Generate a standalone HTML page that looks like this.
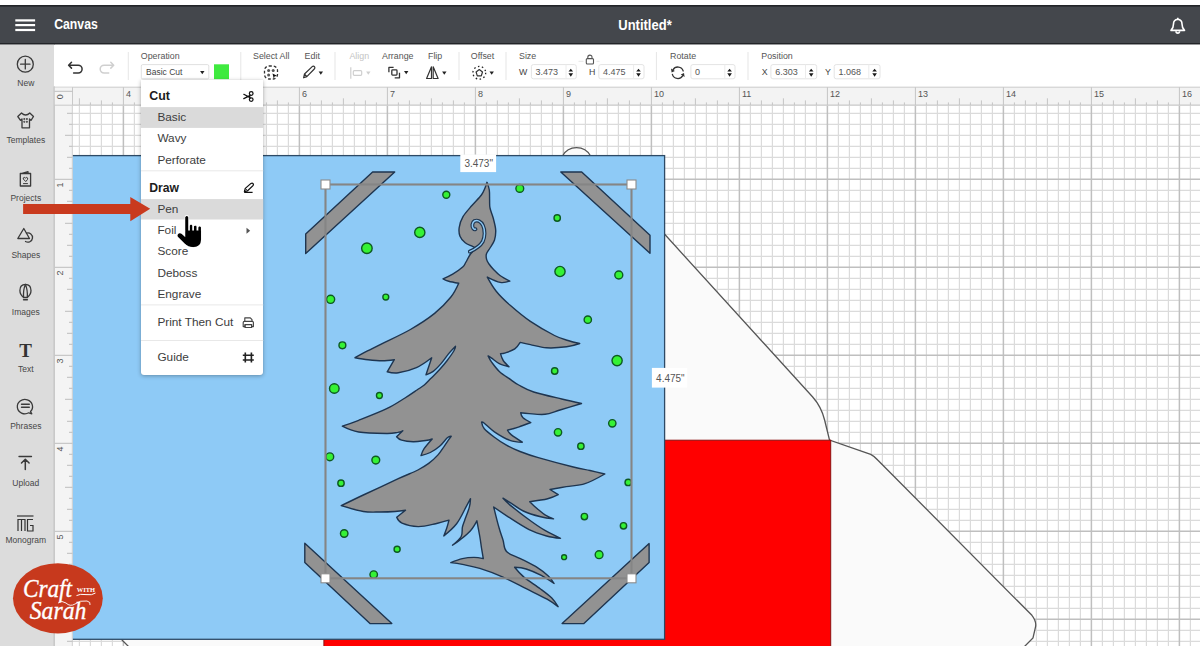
<!DOCTYPE html><html><head><meta charset="utf-8"><style>
*{box-sizing:border-box;margin:0;padding:0}
html,body{width:1200px;height:646px;overflow:hidden;background:#fff;font-family:"Liberation Sans",sans-serif}
body{position:relative}
.a{position:absolute}
text{font-family:"Liberation Sans",sans-serif}
.serif{font-family:"Liberation Serif",serif}
</style></head><body>
<svg class="a" style="left:0;top:0" width="1200" height="646" viewBox="0 0 1200 646">
<rect x="54" y="105" width="1146" height="541" fill="#fff"/>
<path d="M79.4 105V646M90.4 105V646M101.4 105V646M112.4 105V646M134.4 105V646M145.4 105V646M156.4 105V646M167.4 105V646M178.4 105V646M189.4 105V646M200.4 105V646M222.4 105V646M233.4 105V646M244.4 105V646M255.4 105V646M266.4 105V646M277.4 105V646M288.4 105V646M310.4 105V646M321.4 105V646M332.4 105V646M343.4 105V646M354.4 105V646M365.4 105V646M376.4 105V646M398.4 105V646M409.4 105V646M420.4 105V646M431.4 105V646M442.4 105V646M453.4 105V646M464.4 105V646M486.4 105V646M497.4 105V646M508.4 105V646M519.4 105V646M530.4 105V646M541.4 105V646M552.4 105V646M574.4 105V646M585.4 105V646M596.4 105V646M607.4 105V646M618.4 105V646M629.4 105V646M640.4 105V646M662.4 105V646M673.4 105V646M684.4 105V646M695.4 105V646M706.4 105V646M717.4 105V646M728.4 105V646M750.4 105V646M761.4 105V646M772.4 105V646M783.4 105V646M794.4 105V646M805.4 105V646M816.4 105V646M838.4 105V646M849.4 105V646M860.4 105V646M871.4 105V646M882.4 105V646M893.4 105V646M904.4 105V646M926.4 105V646M937.4 105V646M948.4 105V646M959.4 105V646M970.4 105V646M981.4 105V646M992.4 105V646M1014.4 105V646M1025.4 105V646M1036.4 105V646M1047.4 105V646M1058.4 105V646M1069.4 105V646M1080.4 105V646M1102.4 105V646M1113.4 105V646M1124.4 105V646M1135.4 105V646M1146.4 105V646M1157.4 105V646M1168.4 105V646M1190.4 105V646M72 113.3H1200M72 124.3H1200M72 135.3H1200M72 146.3H1200M72 157.3H1200M72 168.3H1200M72 190.3H1200M72 201.3H1200M72 212.3H1200M72 223.3H1200M72 234.3H1200M72 245.3H1200M72 256.3H1200M72 278.3H1200M72 289.3H1200M72 300.3H1200M72 311.3H1200M72 322.3H1200M72 333.3H1200M72 344.3H1200M72 366.3H1200M72 377.3H1200M72 388.3H1200M72 399.3H1200M72 410.3H1200M72 421.3H1200M72 432.3H1200M72 454.3H1200M72 465.3H1200M72 476.3H1200M72 487.3H1200M72 498.3H1200M72 509.3H1200M72 520.3H1200M72 542.3H1200M72 553.3H1200M72 564.3H1200M72 575.3H1200M72 586.3H1200M72 597.3H1200M72 608.3H1200M72 630.3H1200M72 641.3H1200" stroke="#dbdbdb" stroke-width="1.2" fill="none"/>
<path d="M123.4 105V646M211.4 105V646M299.4 105V646M387.4 105V646M475.4 105V646M563.4 105V646M651.4 105V646M739.4 105V646M827.4 105V646M915.4 105V646M1003.4 105V646M1091.4 105V646M1179.4 105V646M72 179.3H1200M72 267.3H1200M72 355.3H1200M72 443.3H1200M72 531.3H1200M72 619.3H1200" stroke="#bfbfbf" stroke-width="1.5" fill="none"/>
<path d="M562.5 156A16 16 0 0 1 590.6 156L664 156L664.2 233.8L812.7 397Q821.5 407 824.6 420L829.5 440L870.7 454.3Q875 456.5 877.7 460L1031.9 615.3Q1036.5 621 1035.6 626.6L1033 638L1021 650L132 650L122 640L122 400L300 156Z" fill="#fafafa" stroke="#555" stroke-width="1.3"/>
<rect x="323.9" y="440.2" width="506.8" height="220" fill="#ff0000" stroke="#8a1010" stroke-width="1"/>
<rect x="40" y="155.6" width="624.6" height="483.7" fill="#8ecaf6" stroke="#2d4a66" stroke-width="1.3"/>
<g fill="#929292" stroke="#1e3550" stroke-width="1.4" stroke-linejoin="round">
<polygon points="372.6,172 394.7,172 305.7,253.6 305.7,234"/>
<polygon points="560.8,172 581.7,172 650,235.2 650,253.3"/>
<polygon points="304.8,543.2 304.8,562.5 370,623.6 391.8,623.6"/>
<polygon points="649.1,543.6 649.1,562.5 583.9,623.6 562.1,623.6"/>
</g>
<path d="M487.0 182.3C487.0 182.3 488.9 187.1 489.3 190.0C489.7 192.9 489.5 197.0 489.6 200.0C489.7 203.0 489.4 205.0 490.0 208.0C490.6 211.0 492.2 214.3 493.2 218.0C494.1 221.7 495.5 226.3 495.7 230.0C495.9 233.7 495.4 237.0 494.5 240.0C493.6 243.0 491.4 245.7 490.0 248.0C488.6 250.3 487.0 252.1 486.4 254.0C485.8 255.9 486.2 257.7 486.6 259.4C487.0 261.1 487.8 262.2 489.0 264.0C490.2 265.8 492.2 268.1 494.0 270.0C495.8 271.9 497.4 273.6 500.0 275.5C502.6 277.4 509.8 281.2 509.8 281.2C509.8 281.2 503.9 283.1 500.2 282.4C496.4 281.7 487.3 277.1 487.3 277.1C487.3 277.1 492.4 286.5 496.2 291.2C500.0 295.9 504.5 300.3 510.2 305.3C515.9 310.3 523.0 316.4 530.4 321.4C537.8 326.4 548.2 332.3 554.5 335.5C560.8 338.7 563.8 339.2 568.0 340.5C572.2 341.8 579.7 343.5 579.7 343.5C579.7 343.5 572.1 346.1 566.6 346.8C561.1 347.5 552.5 348.2 546.5 347.8C540.5 347.4 534.8 345.5 530.4 344.6C526.0 343.7 520.2 342.4 520.2 342.4C520.2 342.4 517.2 347.2 514.8 348.9C512.3 350.6 507.9 352.0 505.5 352.8C503.1 353.6 500.5 353.6 500.5 353.6C500.5 353.6 501.8 358.3 503.2 360.5C504.6 362.7 509.0 366.7 509.0 366.7C509.0 366.7 502.2 365.0 499.3 363.6C496.4 362.2 493.5 359.5 491.6 358.2C489.7 356.9 488.1 355.9 488.1 355.9C488.1 355.9 489.7 359.5 491.6 362.1C493.5 364.7 496.1 368.4 499.3 371.4C502.5 374.4 507.8 377.6 511.0 379.9C514.2 382.2 514.9 383.0 518.7 385.0C522.5 387.0 526.5 389.7 533.7 392.0C540.9 394.3 553.7 397.1 561.7 399.0C569.7 400.9 581.5 403.5 581.5 403.5C581.5 403.5 566.1 408.2 560.0 410.0C553.9 411.8 550.1 413.7 545.0 414.3C539.9 414.9 533.2 413.9 529.2 413.6C525.2 413.4 520.7 412.8 520.7 412.8C520.7 412.8 521.3 416.2 523.0 417.8C524.7 419.4 530.8 422.5 530.8 422.5C530.8 422.5 522.3 425.8 518.4 427.1C514.5 428.4 507.5 430.2 507.5 430.2C507.5 430.2 508.9 432.9 511.4 434.9C513.9 436.9 522.3 442.2 522.3 442.2C522.3 442.2 514.5 442.0 509.9 440.3C505.2 438.6 498.7 434.7 494.4 431.8C490.1 428.9 486.4 424.8 484.3 423.2C482.2 421.6 481.6 422.1 481.6 422.1C481.6 422.1 482.2 426.2 484.3 428.7C486.4 431.2 490.8 434.5 494.4 437.2C498.0 439.9 501.7 442.5 506.0 444.9C510.3 447.3 514.6 449.4 520.0 451.5C525.4 453.6 529.4 455.1 538.3 457.7C547.2 460.3 564.7 464.9 573.3 467.0C581.9 469.1 584.8 469.3 590.0 470.5C595.2 471.7 604.8 474.0 604.8 474.0C604.8 474.0 591.4 481.6 585.0 483.7C578.6 485.8 572.1 485.6 566.3 486.6C560.5 487.6 550.0 489.5 550.0 489.5C550.0 489.5 558.2 494.7 558.2 494.7C558.2 494.7 552.5 497.6 547.7 498.8C543.0 500.0 529.7 501.7 529.7 501.7C529.7 501.7 534.7 506.5 537.3 508.7C539.9 510.9 542.7 513.4 545.4 515.1C548.1 516.8 553.5 518.9 553.5 518.9C553.5 518.9 545.7 518.1 540.7 516.8C535.7 515.5 528.3 513.3 523.3 511.0C518.3 508.7 514.0 505.0 510.6 502.9C507.2 500.8 503.0 498.2 503.0 498.2C503.0 498.2 506.9 502.5 511.7 506.4C516.5 510.3 525.9 517.5 531.5 521.5C537.1 525.5 540.6 527.9 545.4 530.7C550.2 533.5 560.5 538.3 560.5 538.3C560.5 538.3 551.8 537.5 546.6 536.0C541.4 534.5 535.5 532.8 529.1 529.6C522.7 526.4 514.1 520.6 508.2 516.8C502.3 513.0 493.7 507.0 493.7 507.0C493.7 507.0 497.3 521.8 498.9 527.3C500.4 532.8 501.7 536.0 503.0 540.0C504.3 544.0 503.6 548.5 506.5 551.6C509.4 554.7 515.2 555.9 520.4 558.6C525.6 561.3 533.1 565.0 537.8 567.9C542.4 570.8 545.6 573.4 548.3 576.0C551.0 578.6 554.1 583.5 554.1 583.5C554.1 583.5 545.9 577.8 541.3 575.4C536.6 573.0 530.7 570.4 526.2 569.0C521.8 567.6 514.6 567.3 514.6 567.3C514.6 567.3 519.6 573.5 523.9 577.1C528.2 580.7 535.6 585.2 540.2 588.7C544.9 592.2 548.8 595.0 551.8 598.0C554.8 601.0 558.1 606.7 558.1 606.7C558.1 606.7 552.4 602.2 547.1 599.2C541.8 596.2 533.6 592.4 526.2 588.7C518.9 585.0 510.7 580.5 503.0 577.1C495.3 573.7 486.6 570.5 479.8 568.4C473.0 566.3 467.2 565.4 462.4 564.4C457.6 563.4 450.8 562.6 450.8 562.6C450.8 562.6 458.5 559.5 462.4 558.6C466.3 557.7 470.5 557.4 474.0 557.4C477.5 557.4 483.3 558.6 483.3 558.6C483.3 558.6 482.1 551.7 481.5 548.0C480.9 544.3 480.6 541.0 479.8 536.5C479.0 532.0 476.9 520.8 476.9 520.8C476.9 520.8 473.3 527.5 470.5 530.7C467.7 533.9 463.0 537.5 460.0 539.9C457.0 542.3 452.5 545.2 452.5 545.2C452.5 545.2 459.6 539.5 461.2 536.5C462.8 533.5 461.8 529.9 462.4 527.2C463.0 524.5 463.5 523.5 464.7 520.2C465.9 516.9 468.3 511.0 469.3 507.4C470.3 503.8 470.5 498.7 470.5 498.7C470.5 498.7 468.1 503.2 465.8 507.4C463.5 511.6 460.3 519.0 456.6 523.7C452.9 528.5 443.8 535.9 443.8 535.9C443.8 535.9 445.8 530.9 446.7 528.3C447.6 525.7 449.0 520.2 449.0 520.2C449.0 520.2 440.8 522.6 435.7 523.7C430.6 524.8 423.8 526.7 418.2 526.6C412.6 526.5 405.6 524.7 402.0 523.1C398.4 521.5 396.7 517.3 396.7 517.3C396.7 517.3 405.5 510.3 405.5 510.3C405.5 510.3 399.2 511.2 395.0 511.5C390.8 511.8 385.3 512.0 380.0 512.0C374.7 512.0 369.8 512.5 363.3 511.5C356.8 510.4 341.2 505.7 341.2 505.7C341.2 505.7 353.8 499.5 363.3 495.0C372.8 490.5 389.2 482.9 398.3 478.7C407.4 474.5 412.8 472.6 417.9 470.0C423.0 467.4 425.3 465.9 428.7 463.4C432.1 460.9 435.4 457.8 438.0 454.9C440.6 452.0 442.4 448.9 444.2 446.3C446.0 443.7 447.7 441.1 448.9 439.4C450.1 437.7 451.2 436.3 451.2 436.3C451.2 436.3 449.2 436.1 447.3 437.8C445.4 439.5 442.4 443.9 439.6 446.3C436.8 448.8 433.4 450.9 430.3 452.5C427.2 454.1 421.0 455.6 421.0 455.6C421.0 455.6 422.2 451.5 424.1 448.7C426.0 445.9 432.2 439.0 432.2 439.0C432.2 439.0 428.8 440.1 425.6 440.5C422.4 440.9 417.2 441.8 413.2 441.7C409.2 441.6 404.4 440.9 401.6 440.1C398.8 439.3 396.6 436.7 396.6 436.7C396.6 436.7 402.8 430.8 402.8 430.8C402.8 430.8 400.4 431.9 397.7 432.4C395.0 432.8 393.2 433.6 386.7 433.5C380.2 433.4 366.1 433.2 358.7 432.0C351.3 430.8 342.3 426.2 342.3 426.2C342.3 426.2 351.3 423.2 358.7 420.3C366.1 417.4 379.0 412.4 386.7 408.7C394.4 405.0 399.9 401.1 405.0 398.0C410.1 394.9 413.8 392.2 417.0 390.0C420.2 387.8 422.0 386.9 424.3 385.0C426.6 383.1 428.5 380.8 431.0 378.3C433.5 375.8 436.7 372.8 439.4 369.8C442.1 366.8 444.8 363.7 447.2 360.5C449.6 357.3 452.7 352.9 454.1 350.5C455.5 348.1 455.5 346.2 455.5 346.2C455.5 346.2 451.1 350.7 448.7 353.6C446.3 356.5 443.6 360.6 441.0 363.6C438.4 366.6 435.7 369.5 433.2 371.4C430.7 373.3 426.0 374.8 426.0 374.8C426.0 374.8 431.7 357.8 431.7 357.8C431.7 357.8 422.0 365.2 416.4 367.7C410.8 370.2 403.2 372.1 398.3 372.8C393.4 373.5 387.2 371.8 387.2 371.8C387.2 371.8 394.3 359.7 394.3 359.7C394.3 359.7 386.6 360.7 382.2 360.7C377.8 360.7 372.6 360.2 368.1 359.7C363.6 359.2 355.0 357.7 355.0 357.7C355.0 357.7 359.6 355.0 364.1 352.6C368.6 350.2 374.5 347.5 382.2 343.6C389.9 339.8 401.7 334.5 410.4 329.5C419.1 324.5 427.9 318.8 434.6 313.4C441.3 308.0 446.7 302.3 450.7 297.3C454.7 292.3 458.7 283.2 458.7 283.2C458.7 283.2 451.3 281.9 448.7 281.2C446.1 280.5 443.0 278.8 443.0 278.8C443.0 278.8 449.4 276.1 452.7 274.1C456.0 272.2 460.5 269.1 462.7 267.1C464.9 265.1 464.7 264.2 466.0 262.0C467.3 259.8 468.8 256.2 470.5 254.0C472.2 251.8 476.5 248.5 476.5 248.5C476.5 248.5 474.4 247.3 472.5 246.3C470.6 245.3 467.3 244.4 465.2 242.7C463.1 241.0 461.0 238.7 460.0 236.2C459.0 233.7 458.7 230.8 459.2 227.5C459.7 224.2 460.9 220.3 463.0 216.7C465.1 213.1 468.6 209.4 471.7 205.8C474.8 202.2 479.2 198.0 481.4 195.0C483.6 192.0 484.1 190.1 485.0 188.0C485.9 185.9 487.0 182.3 487.0 182.3Z" fill="#929292" stroke="#1e3550" stroke-width="1.4" stroke-linejoin="round"/>
<path d="M469.8 251.6C474.5 249.5 480 246.5 482.8 241.5C485 237 485.2 230 483 225.5C481 221.5 477.5 219.8 474.5 221C472 222.5 471.8 226.5 473.2 228.3C474 229.3 475 229.5 475.5 229.2" fill="none" stroke="#1e3550" stroke-width="3.8" stroke-linecap="round"/>
<path d="M469.8 251.6C474.5 249.5 480 246.5 482.8 241.5C485 237 485.2 230 483 225.5C481 221.5 477.5 219.8 474.5 221C472 222.5 471.8 226.5 473.2 228.3C474 229.3 475 229.5 475.5 229.2" fill="none" stroke="#8ecaf6" stroke-width="1.5" stroke-linecap="round"/>
<g fill="#35f235" stroke="#0d5a22" stroke-width="1.4">
<circle cx="446.3" cy="194.8" r="3.50"/>
<circle cx="419.8" cy="232.4" r="5.10"/>
<circle cx="366.9" cy="248.3" r="5.26"/>
<circle cx="330.6" cy="299.3" r="4.06"/>
<circle cx="385.8" cy="297.1" r="2.94"/>
<circle cx="519.8" cy="188.4" r="3.90"/>
<circle cx="557.2" cy="218.0" r="3.18"/>
<circle cx="560.0" cy="271.5" r="5.10"/>
<circle cx="618.8" cy="275.0" r="3.98"/>
<circle cx="587.8" cy="319.7" r="3.66"/>
<circle cx="342.4" cy="345.3" r="3.42"/>
<circle cx="334.3" cy="388.5" r="4.78"/>
<circle cx="379.4" cy="395.5" r="2.94"/>
<circle cx="329.8" cy="456.8" r="3.90"/>
<circle cx="375.8" cy="460.1" r="3.90"/>
<circle cx="341.0" cy="483.2" r="3.18"/>
<circle cx="617.1" cy="360.6" r="5.10"/>
<circle cx="554.7" cy="371.0" r="3.18"/>
<circle cx="612.3" cy="423.3" r="3.66"/>
<circle cx="558.0" cy="432.3" r="3.66"/>
<circle cx="580.9" cy="446.2" r="3.18"/>
<circle cx="628.2" cy="482.4" r="3.18"/>
<circle cx="344.2" cy="533.5" r="3.74"/>
<circle cx="397.1" cy="549.2" r="3.02"/>
<circle cx="373.7" cy="574.6" r="3.74"/>
<circle cx="584.4" cy="516.6" r="3.18"/>
<circle cx="623.5" cy="525.8" r="3.18"/>
<circle cx="564.1" cy="557.2" r="2.46"/>
<circle cx="599.1" cy="554.7" r="3.90"/>
</g>
<rect x="325.5" y="184.5" width="306" height="393.8" fill="none" stroke="#858585" stroke-width="2.1"/>
<rect x="321.0" y="180.0" width="9" height="9" fill="#fff" stroke="#8c8c8c" stroke-width="1.1"/>
<rect x="627.0" y="180.0" width="9" height="9" fill="#fff" stroke="#8c8c8c" stroke-width="1.1"/>
<rect x="321.0" y="573.8" width="9" height="9" fill="#fff" stroke="#8c8c8c" stroke-width="1.1"/>
<rect x="627.0" y="573.8" width="9" height="9" fill="#fff" stroke="#8c8c8c" stroke-width="1.1"/>
<rect x="460.3" y="154.5" width="35.8" height="17.6" fill="#fff"/>
<text x="464.4" y="166.7" font-size="10" fill="#555">3.473"</text>
<rect x="651.9" y="367.9" width="35.3" height="19.7" fill="#fff"/>
<text x="656.1" y="381.7" font-size="10" fill="#555">4.475"</text>
<rect x="54" y="86.5" width="1146" height="19" fill="#f3f3f3"/>
<path d="M54 87H1200" stroke="#d2d2d2" stroke-width="1.2"/>
<path d="M54 105.2H1200" stroke="#c9c9c9" stroke-width="1.2"/>
<path d="M79.4 98.3V105M90.4 102.4V105M101.4 100.4V105M112.4 102.4V105M123.4 87V105M134.4 102.4V105M145.4 100.4V105M156.4 102.4V105M167.4 98.3V105M178.4 102.4V105M189.4 100.4V105M200.4 102.4V105M211.4 87V105M222.4 102.4V105M233.4 100.4V105M244.4 102.4V105M255.4 98.3V105M266.4 102.4V105M277.4 100.4V105M288.4 102.4V105M299.4 87V105M310.4 102.4V105M321.4 100.4V105M332.4 102.4V105M343.4 98.3V105M354.4 102.4V105M365.4 100.4V105M376.4 102.4V105M387.4 87V105M398.4 102.4V105M409.4 100.4V105M420.4 102.4V105M431.4 98.3V105M442.4 102.4V105M453.4 100.4V105M464.4 102.4V105M475.4 87V105M486.4 102.4V105M497.4 100.4V105M508.4 102.4V105M519.4 98.3V105M530.4 102.4V105M541.4 100.4V105M552.4 102.4V105M563.4 87V105M574.4 102.4V105M585.4 100.4V105M596.4 102.4V105M607.4 98.3V105M618.4 102.4V105M629.4 100.4V105M640.4 102.4V105M651.4 87V105M662.4 102.4V105M673.4 100.4V105M684.4 102.4V105M695.4 98.3V105M706.4 102.4V105M717.4 100.4V105M728.4 102.4V105M739.4 87V105M750.4 102.4V105M761.4 100.4V105M772.4 102.4V105M783.4 98.3V105M794.4 102.4V105M805.4 100.4V105M816.4 102.4V105M827.4 87V105M838.4 102.4V105M849.4 100.4V105M860.4 102.4V105M871.4 98.3V105M882.4 102.4V105M893.4 100.4V105M904.4 102.4V105M915.4 87V105M926.4 102.4V105M937.4 100.4V105M948.4 102.4V105M959.4 98.3V105M970.4 102.4V105M981.4 100.4V105M992.4 102.4V105M1003.4 87V105M1014.4 102.4V105M1025.4 100.4V105M1036.4 102.4V105M1047.4 98.3V105M1058.4 102.4V105M1069.4 100.4V105M1080.4 102.4V105M1091.4 87V105M1102.4 102.4V105M1113.4 100.4V105M1124.4 102.4V105M1135.4 98.3V105M1146.4 102.4V105M1157.4 100.4V105M1168.4 102.4V105M1179.4 87V105M1190.4 102.4V105" stroke="#c4c4c4" stroke-width="1"/>
<text x="126.0" y="96.9" font-size="9" fill="#555">4</text>
<text x="214.0" y="96.9" font-size="9" fill="#555">5</text>
<text x="302.0" y="96.9" font-size="9" fill="#555">6</text>
<text x="390.0" y="96.9" font-size="9" fill="#555">7</text>
<text x="478.0" y="96.9" font-size="9" fill="#555">8</text>
<text x="566.0" y="96.9" font-size="9" fill="#555">9</text>
<text x="654.0" y="96.9" font-size="9" fill="#555">10</text>
<text x="742.0" y="96.9" font-size="9" fill="#555">11</text>
<text x="830.0" y="96.9" font-size="9" fill="#555">12</text>
<text x="918.0" y="96.9" font-size="9" fill="#555">13</text>
<text x="1006.0" y="96.9" font-size="9" fill="#555">14</text>
<text x="1094.0" y="96.9" font-size="9" fill="#555">15</text>
<text x="1182.0" y="96.9" font-size="9" fill="#555">16</text>
<rect x="54" y="86.5" width="18.5" height="560" fill="#f4f4f4"/>
<path d="M54.2 87V646" stroke="#c9c9c9" stroke-width="1.4"/>
<path d="M72.3 105V646" stroke="#d0d0d0" stroke-width="1"/>
<path d="M54 91.3H72.5M69 102.3H72.5M67 113.3H72.5M69 124.3H72.5M65 135.3H72.5M69 146.3H72.5M67 157.3H72.5M69 168.3H72.5M54 179.3H72.5M69 190.3H72.5M67 201.3H72.5M69 212.3H72.5M65 223.3H72.5M69 234.3H72.5M67 245.3H72.5M69 256.3H72.5M54 267.3H72.5M69 278.3H72.5M67 289.3H72.5M69 300.3H72.5M65 311.3H72.5M69 322.3H72.5M67 333.3H72.5M69 344.3H72.5M54 355.3H72.5M69 366.3H72.5M67 377.3H72.5M69 388.3H72.5M65 399.3H72.5M69 410.3H72.5M67 421.3H72.5M69 432.3H72.5M54 443.3H72.5M69 454.3H72.5M67 465.3H72.5M69 476.3H72.5M65 487.3H72.5M69 498.3H72.5M67 509.3H72.5M69 520.3H72.5M54 531.3H72.5M69 542.3H72.5M67 553.3H72.5M69 564.3H72.5M65 575.3H72.5M69 586.3H72.5M67 597.3H72.5M69 608.3H72.5M54 619.3H72.5M69 630.3H72.5M67 641.3H72.5" stroke="#bdbdbd" stroke-width="1"/>
<text transform="translate(62.8 99.5) rotate(-90)" font-size="9" fill="#555">0</text>
<text transform="translate(62.8 187.5) rotate(-90)" font-size="9" fill="#555">1</text>
<text transform="translate(62.8 275.5) rotate(-90)" font-size="9" fill="#555">2</text>
<text transform="translate(62.8 363.5) rotate(-90)" font-size="9" fill="#555">3</text>
<text transform="translate(62.8 451.5) rotate(-90)" font-size="9" fill="#555">4</text>
<text transform="translate(62.8 539.5) rotate(-90)" font-size="9" fill="#555">5</text>
<text transform="translate(62.8 627.5) rotate(-90)" font-size="9" fill="#555">6</text>
<rect x="54" y="87" width="18.5" height="18" fill="#f4f4f4"/>
<path d="M72.5 87V105M54 105.2H72.5" stroke="#c9c9c9" stroke-width="1"/>
<path d="M54 86.9H1200" stroke="#cdcdcd" stroke-width="1.3"/>
<path d="M54 91.3H72.5" stroke="#bdbdbd" stroke-width="1"/>
<text transform="translate(62.8 99.3) rotate(-90)" font-size="9" fill="#555">0</text>
<rect x="0" y="0" width="1200" height="6" fill="#fff"/>
<rect x="0" y="5" width="1200" height="39.5" fill="#44474c"/>
<rect x="0" y="5" width="1200" height="1.6" fill="#222428"/>
<rect x="0" y="43" width="1200" height="1.6" fill="#222428"/>
<rect x="15.3" y="19.3" width="19.8" height="2.2" fill="#fff"/>
<rect x="15.3" y="24.0" width="19.8" height="2.2" fill="#fff"/>
<rect x="15.3" y="28.9" width="19.8" height="2.2" fill="#fff"/>
<text x="54.2" y="29.3" font-size="14.4" font-weight="bold" fill="#fff" textLength="43.6" lengthAdjust="spacingAndGlyphs">Canvas</text>
<text x="618.3" y="30.2" font-size="14.4" font-weight="bold" fill="#fff" textLength="53.4" lengthAdjust="spacingAndGlyphs">Untitled*</text>
<g fill="none" stroke="#fff" stroke-width="1.6" stroke-linejoin="round"><path d="M1171 30.4H1184.5Q1182 28 1182 24Q1182 19.8 1177.8 19.3Q1173.5 19.8 1173.5 24Q1173.5 28 1171 30.4Z"/><path d="M1176 31.3A1.8 1.8 0 0 0 1179.6 31.3"/><path d="M1177.8 17.8V19.2"/></g>
<rect x="54.4" y="44.6" width="1146" height="42" fill="#fff"/>
<rect x="127.8" y="52" width="1" height="28" fill="#e6e6e6"/>
<rect x="240.3" y="52" width="1" height="28" fill="#e6e6e6"/>
<rect x="334.5" y="52" width="1" height="28" fill="#e6e6e6"/>
<rect x="458.5" y="52" width="1" height="28" fill="#e6e6e6"/>
<rect x="505.5" y="52" width="1" height="28" fill="#e6e6e6"/>
<rect x="655.9" y="52" width="1" height="28" fill="#e6e6e6"/>
<rect x="747.5" y="52" width="1" height="28" fill="#e6e6e6"/>
<text x="140.8" y="58.8" font-size="8.85" fill="#555">Operation</text>
<text x="253.0" y="58.8" font-size="8.85" fill="#555">Select All</text>
<text x="304.6" y="58.8" font-size="8.85" fill="#555">Edit</text>
<text x="349.4" y="58.8" font-size="8.85" fill="#c4c4c4">Align</text>
<text x="382.0" y="58.8" font-size="8.85" fill="#555">Arrange</text>
<text x="428.0" y="58.8" font-size="8.85" fill="#555">Flip</text>
<text x="470.8" y="58.8" font-size="8.85" fill="#555">Offset</text>
<text x="519.0" y="58.8" font-size="8.85" fill="#555">Size</text>
<text x="670.0" y="58.8" font-size="8.85" fill="#555">Rotate</text>
<text x="761.3" y="58.8" font-size="8.85" fill="#555">Position</text>
<g fill="none" stroke-width="1.5" stroke-linecap="round" stroke-linejoin="round">
<path d="M71.5 62.3L68.6 65.2L71.5 68.1M68.8 65.2H78.2A3.9 3.9 0 0 1 78.2 73H73.6" stroke="#333"/>
<path d="M110.8 62.3L113.7 65.2L110.8 68.1M113.5 65.2H104.1A3.9 3.9 0 0 0 104.1 73H108.7" stroke="#cfcfcf"/>
</g>
<rect x="141.3" y="64.6" width="67.5" height="14.3" fill="#fff" stroke="#e0e0e0" stroke-width="1" rx="1.5"/>
<text x="146" y="75.2" font-size="8.5" fill="#444">Basic Cut</text>
<path d="M200.1 71.0H204.5L202.3 74.2Z" fill="#222"/>
<rect x="214" y="64.3" width="15" height="14.8" fill="#3fea3f"/>
<rect x="264.5" y="66" width="13" height="13" rx="4.5" fill="none" stroke="#333" stroke-width="1.3" stroke-dasharray="2.8 2"/>
<circle cx="268.6" cy="70.4" r="1.5" fill="#555"/><circle cx="273.2" cy="70.4" r="1.5" fill="#555"/><circle cx="268.6" cy="75" r="1.5" fill="#555"/>
<path d="M272.5 73.5L277 75.8L274.5 76.5L273.8 78.8Z" fill="#111"/>
<path d="M303.6 77.8L304.5 74L312.2 66.6Q313.6 65.6 314.6 66.8Q315.4 68 314.3 69L306.8 76.6Z M304.5 74L306.8 76.6" fill="none" stroke="#333" stroke-width="1.2" stroke-linejoin="round"/>
<path d="M318.6 71.5H323.0L320.8 74.7Z" fill="#222"/>
<path d="M350.8 67.3V78.7" stroke="#cfcfcf" stroke-width="1.2"/><rect x="353.3" y="70.7" width="8.4" height="4.6" rx="1" fill="none" stroke="#cfcfcf" stroke-width="1.2"/>
<path d="M366.1 71.5H370.5L368.3 74.7Z" fill="#cfcfcf"/>
<g fill="none" stroke="#333" stroke-width="1.3" stroke-linejoin="round"><path d="M388.9 72.2V67.4H393.6"/><rect x="391.8" y="69.9" width="5.2" height="5.2" rx="0.8"/><path d="M399.5 72.8V77.8H394.7"/></g>
<path d="M404.0 71.1H408.4L406.2 74.3Z" fill="#222"/>
<g fill="none" stroke="#333" stroke-width="1.2" stroke-linejoin="round"><path d="M431.5 66.8L426.6 78.5H431.5Z"/><path d="M433.2 66.8L438.1 78.5H433.2Z"/></g>
<path d="M442.1 71.5H446.5L444.3 74.7Z" fill="#222"/>
<circle cx="479.3" cy="72.8" r="6.4" fill="none" stroke="#222" stroke-width="1.3" stroke-dasharray="1.5 2.5"/>
<path d="M479.3 69.6L482.5 72L481.3 75.9H477.3L476.1 72Z" fill="none" stroke="#333" stroke-width="1.2" stroke-linejoin="round"/>
<path d="M489.5 71.5H493.9L491.7 74.7Z" fill="#222"/>
<text x="519" y="74.6" font-size="8.8" fill="#444">W</text>
<rect x="531.4" y="64.6" width="44.9" height="14.2" rx="2" fill="#fff" stroke="#e4e4e4"/>
<path d="M566 64.6V78.8" stroke="#ececec"/>
<text x="535.6" y="74.6" font-size="9" fill="#555">3.473</text>
<path d="M568.5 71.5L570.8 68.7L573.1 71.5ZM568.5 73.3L570.8 76.7L573.1 73.3Z" fill="#1a1a1a"/>
<g fill="none" stroke="#555" stroke-width="1.1"><rect x="586.3" y="58.6" width="7.2" height="5.4" rx="1"/><path d="M587.8 58.6V57.2A2.1 2.1 0 0 1 592 57.2V58.6"/></g>
<path d="M578.5 61.3H583.5M596.5 61.3H599.5" stroke="#e6e6e6" stroke-width="1"/>
<text x="589" y="74.6" font-size="8.8" fill="#444">H</text>
<rect x="598.8" y="64.6" width="45.2" height="14.2" rx="2" fill="#fff" stroke="#e4e4e4"/>
<path d="M633.6 64.6V78.8" stroke="#ececec"/>
<text x="603" y="74.6" font-size="9" fill="#555">4.475</text>
<path d="M636.2 71.5L638.5 68.7L640.8 71.5ZM636.2 73.3L638.5 76.7L640.8 73.3Z" fill="#1a1a1a"/>
<g fill="none" stroke="#333" stroke-width="1.3" stroke-linecap="round"><path d="M673 69.8A5.6 5.6 0 0 1 683.2 71"/><path d="M682.6 75.8A5.6 5.6 0 0 1 672.4 74.4"/></g>
<path d="M671 68.6L674.9 70.9L671.6 72.6Z M684.6 76.9L680.8 74.6L684 72.9Z" fill="#333"/>
<rect x="690.9" y="64.6" width="44.1" height="14.2" rx="2" fill="#fff" stroke="#e4e4e4"/>
<path d="M724.8 64.6V78.8" stroke="#ececec"/>
<text x="695" y="74.6" font-size="9" fill="#555">0</text>
<path d="M727.3 71.5L729.6 68.7L731.9 71.5ZM727.3 73.3L729.6 76.7L731.9 73.3Z" fill="#1a1a1a"/>
<text x="761.8" y="74.6" font-size="8.8" fill="#444">X</text>
<rect x="770.9" y="64.6" width="45.8" height="14.2" rx="2" fill="#fff" stroke="#e4e4e4"/>
<path d="M805.5 64.6V78.8" stroke="#ececec"/>
<text x="775.3" y="74.6" font-size="9" fill="#555">6.303</text>
<path d="M808.9 71.5L811.2 68.7L813.5 71.5ZM808.9 73.3L811.2 76.7L813.5 73.3Z" fill="#1a1a1a"/>
<text x="825" y="74.6" font-size="8.8" fill="#444">Y</text>
<rect x="834.2" y="64.6" width="45.8" height="14.2" rx="2" fill="#fff" stroke="#e4e4e4"/>
<path d="M868.8 64.6V78.8" stroke="#ececec"/>
<text x="838.6" y="74.6" font-size="9" fill="#555">1.068</text>
<path d="M872.3 71.5L874.6 68.7L876.9 71.5ZM872.3 73.3L874.6 76.7L876.9 73.3Z" fill="#1a1a1a"/>
<rect x="0" y="44.6" width="54" height="602" fill="#dcdcdc"/>
<rect x="53.4" y="86.5" width="1.4" height="560" fill="#c9c9c9"/>
<text x="25.8" y="86.2" font-size="8.5" fill="#474747" text-anchor="middle">New</text>
<text x="25.8" y="143.2" font-size="8.5" fill="#474747" text-anchor="middle">Templates</text>
<text x="25.8" y="200.5" font-size="8.5" fill="#474747" text-anchor="middle">Projects</text>
<text x="25.8" y="257.6" font-size="8.5" fill="#474747" text-anchor="middle">Shapes</text>
<text x="25.8" y="314.6" font-size="8.5" fill="#474747" text-anchor="middle">Images</text>
<text x="25.8" y="371.6" font-size="8.5" fill="#474747" text-anchor="middle">Text</text>
<text x="25.8" y="428.6" font-size="8.5" fill="#474747" text-anchor="middle">Phrases</text>
<text x="25.8" y="485.6" font-size="8.5" fill="#474747" text-anchor="middle">Upload</text>
<text x="25.8" y="542.6" font-size="8.5" fill="#474747" text-anchor="middle">Monogram</text>
<g fill="none" stroke="#3a3a3a" stroke-width="1.3" stroke-linecap="round" stroke-linejoin="round">
<circle cx="25.3" cy="64.2" r="8"/><path d="M25.3 59.5V68.9M20.6 64.2H30"/>
<path d="M21.5 113L17.8 116.5L20.5 120.3L22 119V127.8H29.5V119L31 120.3L33.5 116.5L29.8 113Q27.8 115 25.6 115Q23.5 115 21.5 113Z"/>
<circle cx="24.3" cy="119" r=".35"/><circle cx="26.9" cy="119" r=".35"/><circle cx="24.3" cy="121.8" r=".35"/><circle cx="26.9" cy="121.8" r=".35"/>
<path d="M20.3 173.8L28 171.6V173.5M20.3 173.8V186H30.6V173.5H20.3"/>
<path d="M25.5 181.3L23.3 179Q22.8 177.6 24.3 177.4Q25.2 177.4 25.5 178.3Q25.8 177.4 26.7 177.4Q28.2 177.6 27.7 179Z" stroke-width="1"/><path d="M23.5 183.6H27.5" stroke-width="1"/>
<path d="M23.8 228.5L17.8 238.5H29.5Z"/><path d="M26.5 233.2A4.6 4.6 0 1 1 25.5 241.5"/>
<path d="M25.4 284.5Q19.9 284.5 19.9 290.5Q19.9 294.5 23.6 297.5H27.3Q31 294.5 31 290.5Q31 284.5 25.4 284.5Z"/><path d="M25.4 284.5Q23 290 23.6 297.5M25.4 284.5Q27.8 290 27.3 297.5"/><path d="M23.6 299.8H27.3" stroke-width="1.6"/>
</g>
<text x="25.5" y="356.8" class="serif" font-size="19" font-weight="bold" fill="#333" text-anchor="middle">T</text>
<g fill="none" stroke="#3a3a3a" stroke-width="1.3" stroke-linecap="round" stroke-linejoin="round">
<path d="M30.5 411.5A7.6 7.2 0 1 0 28.8 412.8L31.8 413.8Z"/><path d="M21.5 404.3H29.3M21.5 407.3H29.3" stroke-width="1.4"/>
<path d="M19 456.5H31.5"/><path d="M25.3 469.6V459.2M21.5 463L25.3 459.2L29.1 463" stroke-width="1.5"/>
</g>
<g fill="none" stroke="#333" stroke-width="1.2"><path d="M17 516H33.5"/><path d="M18 531V519.5H25V531M21.5 519.5V531"/><path d="M33 519.5H27.5V531H33V525.5H30"/></g>

</svg>
<div class="a" style="left:141px;top:79.5px;width:122.2px;height:295.2px;background:#fff;border-radius:0 0 3px 3px;box-shadow:0 1px 4px rgba(0,0,0,.30),0 0 1px rgba(0,0,0,.15)"></div>
<svg class="a" style="left:0;top:0" width="1200" height="646" viewBox="0 0 1200 646">
<rect x="141" y="107.1" width="122.2" height="20.8" fill="#dadada"/>
<rect x="141" y="199.1" width="122.2" height="20.4" fill="#dadada"/>
<rect x="141" y="170.3" width="122.2" height="1" fill="#e8e8e8"/>
<rect x="141" y="304.4" width="122.2" height="1" fill="#e8e8e8"/>
<rect x="141" y="340.0" width="122.2" height="1" fill="#e8e8e8"/>
<text x="149.2" y="99.6" font-size="12.4" font-weight="bold" fill="#1c1c1c">Cut</text>
<text x="149.2" y="192" font-size="12.2" font-weight="bold" fill="#1c1c1c">Draw</text>
<text x="157.4" y="121.0" font-size="11.8" fill="#3d3d3d">Basic</text>
<text x="157.4" y="142.2" font-size="11.8" fill="#3d3d3d">Wavy</text>
<text x="157.4" y="163.6" font-size="11.8" fill="#3d3d3d">Perforate</text>
<text x="157.4" y="212.6" font-size="11.8" fill="#3d3d3d">Pen</text>
<text x="157.4" y="233.5" font-size="11.8" fill="#3d3d3d">Foil</text>
<text x="157.4" y="255.0" font-size="11.8" fill="#3d3d3d">Score</text>
<text x="157.4" y="276.5" font-size="11.8" fill="#3d3d3d">Deboss</text>
<text x="157.4" y="297.6" font-size="11.8" fill="#3d3d3d">Engrave</text>
<text x="157.4" y="326.2" font-size="11.8" fill="#3d3d3d">Print Then Cut</text>
<text x="157.4" y="361.0" font-size="11.8" fill="#3d3d3d">Guide</text>
<g fill="none" stroke="#111" stroke-width="1.25" stroke-linecap="round"><circle cx="251.2" cy="93.5" r="1.85"/><circle cx="251.2" cy="99.6" r="1.85"/><path d="M243.8 94.3L249.2 97.1L250.2 95.2M243.8 98.6L249.2 95.9L250.2 97.9"/></g>
<g fill="none" stroke="#111" stroke-width="1.25" stroke-linejoin="round"><path d="M244.4 191.7L245.3 188.4L251 183.4Q252.2 182.6 253.1 183.6Q253.9 184.7 253 185.6L247.6 190.8Z"/><path d="M244.2 192.4H252.6"/><path d="M245.3 188.4L247.6 190.8" stroke-width="0.9"/></g>
<path d="M246.5 227.8L250.2 230.8L246.5 233.8Z" fill="#555"/>
<g fill="none" stroke="#444" stroke-width="1.15" stroke-linejoin="round"><path d="M244.8 321.2V317.8H250.3L252 319.6V321.2"/><path d="M243.2 326.6V322.5Q243.2 321.3 244.4 321.3H252.2Q253.4 321.3 253.4 322.5V326.6H251.6V324.6H245V326.6Z"/><path d="M245 324.6V327.5H251.6V324.6"/></g>
<g fill="none" stroke="#222" stroke-width="1.6"><path d="M245.3 352.6V362.6M251.4 352.6V362.6M242.8 355.2H253.8M242.8 360H253.8"/></g>
<path d="M23.1 204H130.3V196.9L150.2 208.8L130.3 221.3V214H23.1Z" fill="#c93a1e"/>
<path d="M185.2 231V217.2A1.55 1.55 0 0 1 188.3 217.2V231ZM189.8 232V225.7A1.25 1.25 0 0 1 192.3 225.7V232ZM193.9 232V226.6A1.35 1.35 0 0 1 196.6 226.6V232ZM198.3 232V227.5A1.35 1.35 0 0 1 201 227.5V232ZM185.2 230.5H201.1V239.5Q201 247 193.2 247.2Q188.3 247.1 184.6 243.6L177.8 236.8Q176.7 235 178.3 233.6Q180 232.6 181.8 234L185.2 237.2Z" fill="#000" stroke="#fff" stroke-width="1.1" stroke-linejoin="round"/>
<path d="M185.3 230.5V217.3A1.5 1.5 0 0 1 188.2 217.3V232M189.9 232V225.7A1.2 1.2 0 0 1 192.2 225.7V232M194 232V226.6A1.3 1.3 0 0 1 196.5 226.6V232M198.4 232V227.5A1.3 1.3 0 0 1 200.9 227.5V232M185.3 230.6H201V239.5Q201 247 193.2 247.1Q188.3 247 184.7 243.5L177.9 236.8Q176.8 235 178.4 233.7Q180 232.7 181.8 234.1L185.3 237.2Z" fill="#000"/>
<ellipse cx="57.9" cy="598.3" rx="44.9" ry="35.1" fill="#c7391d"/>
<text x="23" y="597.2" class="serif" font-style="italic" font-size="24.5" fill="#fff" stroke="#fff" stroke-width="0.35" textLength="49" lengthAdjust="spacingAndGlyphs">Craft</text>
<text x="76.8" y="591.9" class="serif" font-size="5.4" font-weight="bold" fill="#fff" textLength="18.2" lengthAdjust="spacingAndGlyphs">WITH</text>
<path d="M76.5 595.6Q80 593.6 86 594.6Q92 595.6 95.5 593" stroke="#fff" stroke-width="1" fill="none"/>
<path d="M58 603Q62 600 66 603Q70 607 75 604Q80 600 87 601Q91 602 90 605" stroke="#fff" stroke-width="0.9" fill="none"/>
<text x="29.8" y="619.3" class="serif" font-style="italic" font-size="24.5" fill="#fff" stroke="#fff" stroke-width="0.35" textLength="56.5" lengthAdjust="spacingAndGlyphs">Sarah</text>
</svg>
</body></html>
